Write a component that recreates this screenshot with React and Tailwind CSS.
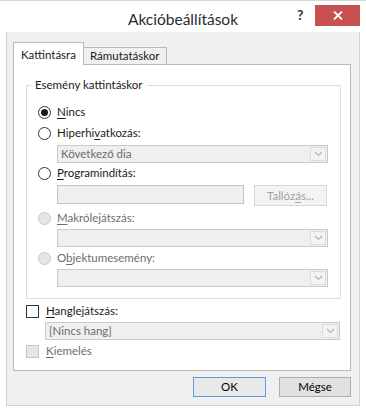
import React from "react";

const Chevron = () => (
  <svg width="9" height="6" viewBox="0 0 9 6" fill="none">
    <path d="M1 1 L4.5 4.5 L8 1" stroke="#b4b4b4" strokeWidth="1.2" />
  </svg>
);

const Select = ({ text, className }) => (
  <div className={"flex items-center h-[18px] border border-[#cacaca] bg-[#efefef] " + className}>
    <span className="flex-1 pl-[3px] text-[#6d6d6d] leading-none">{text}</span>
    <div className="w-[16px] h-[14px] mr-[1px] border border-[#dcdcdc] bg-[#f3f3f3] flex items-center justify-center">
      <Chevron />
    </div>
  </div>
);

const Radio = ({ checked, disabled }) => (
  <div
    className={
      "w-[13px] h-[13px] rounded-full border flex items-center justify-center " +
      (disabled ? "border-[#c6c6c6] bg-[#e6e6e6]" : "border-[#333333] bg-white")
    }
  >
    {checked && <div className="w-[7px] h-[7px] rounded-full bg-[#1a1a1a]" />}
  </div>
);

const Check = ({ disabled }) => (
  <div
    className={
      "w-[13px] h-[13px] border " +
      (disabled ? "border-[#c6c6c6] bg-[#e6e6e6]" : "border-[#333333] bg-white")
    }
  />
);

export default function App() {
  return (
    <div
      className="w-[366px] h-[410px] bg-white overflow-hidden text-[11.5px] text-[#1a1a1a]"
      style={{ fontFamily: 'Lato, "Liberation Sans", sans-serif' }}
    >
      {/* title bar */}
      <div className="relative h-[32px] border-t border-[#d6d6d6] flex items-center justify-center">
        <span className="text-[15.5px] text-[#2b2b2b] mt-[6px]">Akcióbeállítások</span>
        <span className="absolute left-[297px] top-[3px] text-[14px] font-bold text-[#333]">?</span>
        <div className="absolute left-[315px] top-[4px] w-[45px] h-[21px] bg-[#c75050] flex items-center justify-center">
          <svg width="10" height="9" viewBox="0 0 10 9">
            <path d="M1 0.5 L9 8.5 M9 0.5 L1 8.5" stroke="white" strokeWidth="1.8" />
          </svg>
        </div>
      </div>

      {/* body */}
      <div className="ml-[6px] w-[354px] h-[374px] border-l border-r border-b border-[#d2d2d2] bg-[#f0f0f0] pt-[10px] pl-[6px] pr-[7px]">
        {/* tabs */}
        <div className="flex items-end h-[22px]">
          <div className="relative z-10 h-[23px] -mb-[1px] w-[71px] border-l border-t border-r border-[#b9b9b9] bg-white pl-[7px] pt-[3px]">
            Kattintásra
          </div>
          <div className="h-[17px] w-[83px] border-t border-r border-[#b9b9b9] bg-[#f0f0f0] pl-[6px] leading-[16px]">
            Rámutatáskor
          </div>
        </div>

        {/* panel */}
        <div className="w-[338px] h-[307px] border border-[#b9b9b9] bg-white">
          {/* group box */}
          <div className="relative mt-[20px] ml-[12px] w-[315px] h-[214px] border border-[#dcdcdc] pl-[11px] pr-[12px]">
            <span className="absolute left-[4px] -top-[10px] bg-white px-[4px] leading-[18px]">
              Esemény kattintáskor
            </span>

            <div className="flex items-center h-[16px] mt-[18px] gap-[6px]">
              <Radio checked />
              <span>
                <u className="underline-offset-2">N</u>incs
              </span>
            </div>

            <div className="flex items-center h-[16px] mt-[5px] gap-[6px]">
              <Radio />
              <span>
                Hiperhi<u className="underline-offset-2">v</u>atkozás:
              </span>
            </div>
            <Select text="Következő dia" className="mt-[4px] ml-[19px]" />

            <div className="flex items-center h-[16px] mt-[2px] gap-[6px]">
              <Radio />
              <span>
                <u className="underline-offset-2">P</u>rogramindítás:
              </span>
            </div>
            <div className="flex items-start mt-[4px] ml-[19px] gap-[10px] h-[21px]">
              <div className="w-[187px] h-[19px] border border-[#c3c3c3] bg-[#efefef]" />
              <div className="w-[73px] h-[21px] border border-[#d6d6d6] bg-[#f3f3f3] flex items-center justify-center text-[#a0a0a0]">
                Tallóz<u className="underline-offset-2">á</u>s...
              </div>
            </div>

            <div className="flex items-center h-[16px] mt-[4px] gap-[6px] text-[#6d6d6d]">
              <Radio disabled />
              <span>
                <u className="underline-offset-2">M</u>akrólejátszás:
              </span>
            </div>
            <Select text="" className="mt-[3px] ml-[19px]" />

            <div className="flex items-center h-[16px] mt-[3px] gap-[6px] text-[#6d6d6d]">
              <Radio disabled />
              <span>
                O<u className="underline-offset-2">b</u>jektumesemény:
              </span>
            </div>
            <Select text="" className="mt-[3px] ml-[19px]" />
          </div>

          <div className="pl-[12px] pr-[10px]">
            <div className="flex items-center h-[16px] mt-[4px] gap-[7px]">
              <Check />
              <span>
                <u className="underline-offset-2">H</u>anglejátszás:
              </span>
            </div>
            <Select text="[Nincs hang]" className="mt-[3px] ml-[19px] h-[17px]" />
            <div className="flex items-center h-[16px] mt-[3px] gap-[7px] text-[#6d6d6d]">
              <Check disabled />
              <span>
                <u className="underline-offset-2">K</u>iemelés
              </span>
            </div>
          </div>
        </div>

        {/* buttons */}
        <div className="flex justify-end gap-[13px] mt-[6px] pr-[1px]">
          <div className="w-[73px] h-[20px] border border-[#5a9de0] bg-[#e8e8e8] flex items-center justify-center text-black">
            OK
          </div>
          <div className="w-[72px] h-[20px] border border-[#adadad] bg-[#e1e1e1] flex items-center justify-center text-black">
            Mégse
          </div>
        </div>
      </div>
    </div>
  );
}
